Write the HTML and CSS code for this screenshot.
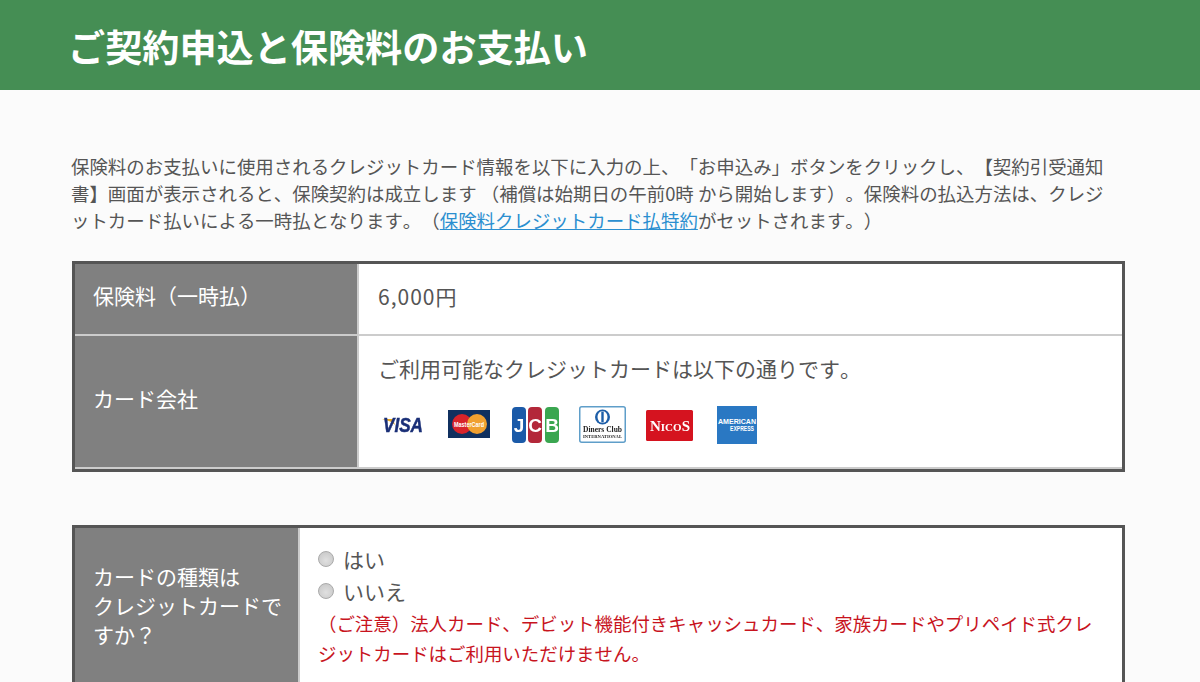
FILE: index.html
```html
<!DOCTYPE html>
<html lang="ja">
<head>
<meta charset="utf-8">
<title>ご契約申込と保険料のお支払い</title>
<link rel="stylesheet" href="styles.css">
</head>
<body>
<header class="page-header"><h1 class="page-title">ご契約申込と保険料のお支払い</h1></header>
<main class="content">
<p class="intro">保険料のお支払いに使用されるクレジットカード情報を以下に入力の上、「お申込み」ボタンをクリックし、【契約引受通知書】画面が表示されると、保険契約は成立します （補償は始期日の午前0時 から開始します）。保険料の払込方法は、クレジットカード払いによる一時払となります。（<a class="link" href="#">保険料クレジットカード払特約</a>がセットされます。）</p>
<section class="panel panel-wide">
<div class="row">
<div class="label">保険料（一時払）</div>
<div class="value value-price">6,000円</div>
</div>
<div class="row row-last">
<div class="label">カード会社</div>
<div class="value">
<p class="cards-note">ご利用可能なクレジットカードは以下の通りです。</p>
<div class="cards">
<svg class="card card-visa" width="46" height="40" viewBox="0 0 46 40"><path d="M3 14h11l2 6q-3-4-13-6z" fill="#e9a823"/><text x="4" y="27" textLength="40" lengthAdjust="spacingAndGlyphs" class="visa">VISA</text></svg>
<svg class="card card-mc" width="42" height="40" viewBox="0 0 42 40"><rect y="5" width="42" height="28" fill="#10305f"/><circle cx="14" cy="19" r="10" fill="#d8232a"/><circle cx="29" cy="19" r="10" fill="#f0a030"/><text x="6" y="21.500" textLength="30" lengthAdjust="spacingAndGlyphs" class="mc">MasterCard</text></svg>
<svg class="card card-jcb" width="48" height="40" viewBox="0 0 48 40"><rect x="1" y="2" width="14" height="36" rx="4" fill="#1b5aa8"/><rect x="17" y="2" width="14" height="36" rx="4" fill="#b3283a"/><rect x="34" y="2" width="14" height="36" rx="4" fill="#3aa650"/><text x="8" y="27" text-anchor="middle" class="jcb">J</text><text x="24" y="27" text-anchor="middle" class="jcb">C</text><text x="41" y="27" text-anchor="middle" class="jcb">B</text></svg>
<svg class="card card-diners" width="48" height="40" viewBox="0 0 48 40"><rect x=".75" y="1.750" width="45.500" height="35.500" rx="2" fill="#fff" stroke="#5f9ec9" stroke-width="1.500"/><circle cx="23.500" cy="12" r="7.500" fill="#1d5ea8"/><ellipse cx="23.500" cy="12" rx="5" ry="6" fill="#fff"/><rect x="22.300" y="6.500" width="2.400" height="11" fill="#1d5ea8"/><text x="4" y="27" textLength="39" lengthAdjust="spacingAndGlyphs" class="diners">Diners Club</text><text x="4" y="33" textLength="39" lengthAdjust="spacingAndGlyphs" class="diners-sub">INTERNATIONAL</text></svg>
<svg class="card card-nicos" width="48" height="40" viewBox="0 0 48 40"><rect y="5" width="47" height="31" rx="1.500" fill="#d5131f"/><text x="4" y="26" class="nicos">N<tspan class="nicos-small">ICO</tspan>S</text></svg>
<svg class="card card-amex" width="40" height="40" viewBox="0 0 40 40"><rect y="1" width="40" height="38" fill="#2a78c3"/><text x="1" y="19" textLength="38" lengthAdjust="spacingAndGlyphs" class="amex">AMERICAN</text><text x="13" y="26" textLength="24" lengthAdjust="spacingAndGlyphs" class="amex">EXPRESS</text></svg>
</div>
</div>
</div>
</section>
<section class="panel panel-form">
<div class="row row-form">
<div class="label label-narrow">カードの種類は<br>クレジットカードで<br>すか？</div>
<div class="value value-form">
<label class="choice"><input class="radio" type="radio" name="kind">はい</label>
<label class="choice"><input class="radio" type="radio" name="kind">いいえ</label>
<p class="notice">（ご注意）法人カード、デビット機能付きキャッシュカード、家族カードやプリペイド式クレジットカードはご利用いただけません。</p>
</div>
</div>
</section>
</main>
</body>
</html>
```
FILE: styles.css
```css
* { box-sizing: border-box; }
html, body { margin: 0; height: 100%; overflow: hidden; }
body {
  background: #fbfbfb;
  color: #555;
  font-family: "Noto Sans CJK JP", "Noto Sans", sans-serif;
  font-size: 21px;
  text-spacing-trim: space-all;
  font-kerning: none;
}
.page-header { background: #458e54; height: 90px; padding: 0 68px; display: flex; align-items: center; }
.page-title { margin: 0 0 -3px; color: #fff; font-size: 37.150px; font-weight: 700; line-height: 1; }
.content { width: 1053px; margin-left: 72px; padding-top: 63px; }
.intro { margin: 0 0 27px -1px; width: 1045px; font-size: 18.450px; line-height: 27px; color: #555; }
.link { color: #2b8fd0; }
.panel { border: 3px solid #555; background: #fff; }
.panel-wide { height: 211px; }
.panel-form { margin-top: 53px; }
.row { display: flex; border-bottom: 2px solid #ccc; }
.row:first-child { height: 72px; }
.row.row-last { height: 133px; }
.row.row-form { height: 160px; border-bottom: 0; }
.label { width: 284px; flex: none; background: #808080; color: #fff; border-right: 2px solid #ccc; display: flex; align-items: center; padding: 0 0 7px 18px; line-height: 29px; }
.label-narrow { width: 225px; display: block; padding: 34px 0 0 18px; }
.value { flex: 1; padding-left: 19px; }
.value-price { display: flex; align-items: center; padding-bottom: 7px; letter-spacing: 1px; }
.cards-note { margin: 17px 0 0; line-height: 30px; }
.cards { display: flex; align-items: center; gap: 20px; margin: 22px 0 0 1px; filter: blur(.4px); }
.card { flex: none; }
.card-mc { margin-left: 3px; }
.card-jcb { margin-left: 1px; }
.card-diners { margin-left: 0; }
.card-nicos { margin-left: -1px; }
.card-amex { margin-left: 3px; }
.visa { font: italic 700 21px "Liberation Sans", sans-serif; fill: #1a2f77; stroke: #1a2f77; stroke-width: .5px; }
.mc { font: 700 6.500px "Liberation Sans", sans-serif; fill: #fff; }
.jcb { font: 700 19px "Liberation Sans", sans-serif; fill: #fff; }
.diners { font: 700 9px "Liberation Serif", serif; fill: #222; }
.diners-sub { font: 700 4.500px "Liberation Serif", serif; fill: #222; }
.nicos { font: 700 15px "Liberation Serif", serif; fill: #fff; }
.nicos-small { font-size: 11px; }
.amex { font: 700 6.500px "Liberation Sans", sans-serif; fill: #fff; }
.value-form { padding-left: 18px; padding-top: 15px; }
.choice { display: flex; align-items: center; height: 32px; }
.radio { appearance: none; width: 16px; height: 16px; margin: 0 9px 0 0; border: 1px solid #aaa; border-radius: 50%; background: radial-gradient(circle at 50% 60%, #e0e0e0, #c4c4c4); }
.notice { margin: 1px 0 0; max-width: 785px; color: #c8141e; font-size: 18.450px; line-height: 30px; }
```
